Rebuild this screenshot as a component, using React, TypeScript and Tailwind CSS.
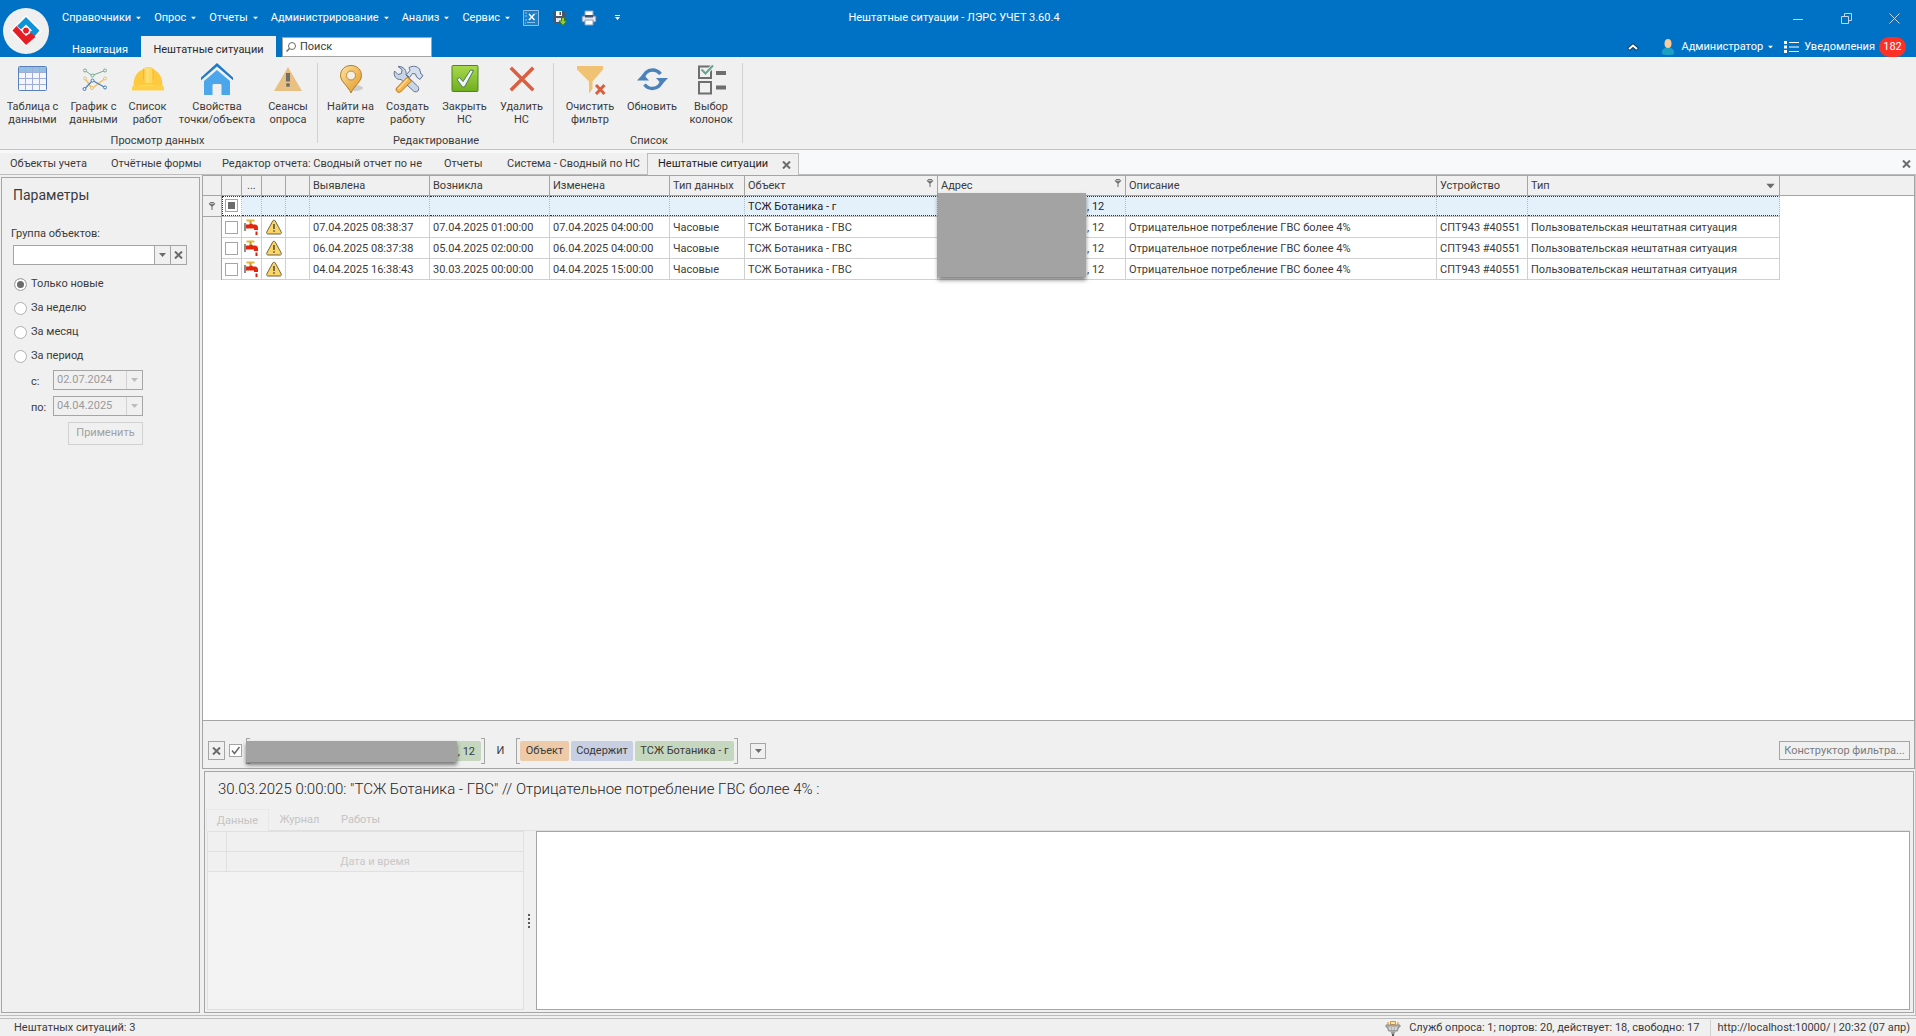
import { useState, type ReactNode } from "react";
import clsx from "clsx";

type IconProps = { className?: string };

function Arrow({ className }: IconProps) {
  return (
    <svg viewBox="0 0 7 4" className={clsx("h-1 w-[7px] shrink-0", className)}>
      <path d="M0 0h7L3.500 4z" fill="currentColor" />
    </svg>
  );
}

function Cross({ className }: IconProps) {
  return (
    <svg viewBox="0 0 9 8" className={clsx("h-2 w-[9px] shrink-0", className)}>
      <path d="M1 .5l7 7M8 .5l-7 7" stroke="currentColor" strokeWidth="2" />
    </svg>
  );
}

function FunnelIcon({ className }: IconProps) {
  return (
    <svg viewBox="0 0 8 8" className={clsx("size-2 shrink-0", className)}>
      <path d="M1 2l2.500 2.500V8h1V4.500L7 2z" fill="#6b6b6b" />
      <ellipse cx="4" cy="1.700" rx="2.700" ry="1.200" fill="#c8c8c8" stroke="#6b6b6b" strokeWidth="1" />
    </svg>
  );
}

function Logo() {
  return (
    <svg viewBox="0 0 46 46" className="size-[46px]">
      <circle cx="23" cy="23" r="23" fill="#efefef" />
      <path d="M23 7l16 16-16 15.500L7 23z" fill="#fff" />
      <path d="M23 9l13.500 13.500L31.500 28.500 26.500 24l2.500-1.500-6-6-5 5-4-3.500z" fill="#0d94d8" />
      <path d="M9.500 22.500l4-4.500 9.500 10 5-3.500 4.500 4.500L23 37z" fill="#e31e24" />
      <circle cx="23" cy="22.500" r="3.500" fill="#e31e24" stroke="#fff" strokeWidth="1" />
    </svg>
  );
}

function TableIcon() {
  return (
    <svg viewBox="0 0 32 32" className="size-8">
      <rect x="1.500" y="3.500" width="28" height="24" rx="1" fill="#f4f6fd" />
      <path d="M2 4h27v5H2z" fill="#94bfe0" />
      <path d="M2 9.500h27M2 15.500h27M2 21.500h27M8.500 4v23M15.500 4v23M22.500 4v23" stroke="#9fadd8" />
      <rect x="1.500" y="3.500" width="28" height="24" rx="1" fill="none" stroke="#5a80bb" />
    </svg>
  );
}

function ChartIcon() {
  return (
    <svg viewBox="0 0 32 32" className="size-8" fill="none">
      <path d="M7 7.500l7 5 13-5" stroke="#6fae93" />
      <path d="M7 15.500l7 10 13-10" stroke="#edc06a" strokeWidth="1.500" />
      <path d="M6 26.500l8.500-9L27 24.500" stroke="#4a7fb8" strokeWidth="1.200" />
      <g fill="#f0f0f0">
        <g stroke="#6fae93">
          <circle cx="7" cy="7.500" r="1.500" />
          <circle cx="14.500" cy="12.500" r="1.500" />
          <circle cx="27" cy="7.500" r="1.500" />
        </g>
        <g stroke="#edc06a">
          <circle cx="7" cy="15.500" r="1.500" />
          <circle cx="14" cy="25" r="1.500" />
          <circle cx="27" cy="15.500" r="1.500" />
        </g>
        <g stroke="#4a7fb8">
          <circle cx="6.500" cy="26" r="1.500" />
          <circle cx="14.500" cy="17.500" r="1.500" />
          <circle cx="27" cy="24.500" r="1.500" />
        </g>
      </g>
    </svg>
  );
}

function HelmetIcon() {
  return (
    <svg viewBox="0 0 32 32" className="size-8">
      <path d="M1.500 22.500C1.500 13 6 7.500 12 6h8c6 1.500 10.500 7 10.500 16.500z" fill="#fec93f" />
      <path d="M0 25c0-2 2-3.500 5-3.500 7 2 15 2 22 0 3 0 5 1.500 5 3.500v2.500H0z" fill="#ffcf4a" />
      <path d="M11 5.500h1.500V18L11 16zM20 5.500h1.500V16L20 18z" fill="#f1b62d" />
      <path d="M12.500 6c0-1.200.8-2 2-2h4c1.200 0 2 .8 2 2v12c0 1.800-1.700 2.500-4 2.500s-4-.7-4-2.500z" fill="#ffd85e" />
      <path d="M14.500 5h2v14h-2z" fill="#ffe27f" />
    </svg>
  );
}

function HouseIcon() {
  return (
    <svg viewBox="0 0 32 32" className="size-8">
      <path d="M16 7l13 11v14h-8.500V22.500c0-1-.5-1.500-1.500-1.500h-6c-1 0-1.500.5-1.500 1.500V32H3V18z" fill="#4ba6ec" />
      <path d="M0 14.500L16 0l16 14.500v2.700L16 3.500 0 17.200z" fill="#1f78c8" />
    </svg>
  );
}

function SessionsIcon() {
  return (
    <svg viewBox="0 0 32 32" className="size-8">
      <path d="M16 4l14 24H2z" fill="#e8c081" />
      <path d="M14 10h4v8.500h-4z" fill="#6e6e6e" />
      <circle cx="16" cy="22" r="2" fill="#6e6e6e" />
    </svg>
  );
}

function PinIcon() {
  return (
    <svg viewBox="0 0 32 32" className="size-8">
      <defs>
        <linearGradient id="pin" x1="0" y1="0" x2="1" y2="1">
          <stop offset="0" stopColor="#fbe3a4" />
          <stop offset="1" stopColor="#e3951f" />
        </linearGradient>
      </defs>
      <ellipse cx="20" cy="25" rx="8" ry="3" fill="#000" opacity=".15" />
      <path d="M16 2.500C9.600 2.500 5.500 7 5.500 12.500c0 6.500 7.500 10 10.500 17.500 3-7.500 10.500-11 10.500-17.500C26.500 7 22.400 2.500 16 2.500z" fill="url(#pin)" stroke="#b37d24" />
      <circle cx="16" cy="12.500" r="4.500" fill="#f3efe6" stroke="#b98a3d" />
    </svg>
  );
}

function ToolsIcon() {
  return (
    <svg viewBox="0 0 32 32" className="size-8">
      <path d="M6 3.500l4 3-.5 4-3.500 1L2.500 8c-1.500 5 2 9 6.500 8.500L21.500 28c1.500 1.500 4.500 1 5-1s0-3-1-4L14 12c1-4.500-2.500-9-8-8.500z" fill="#c9d5e6" stroke="#5f7391" />
      <path d="M17 4.500c4-2 8-1.500 10.500 1.500l1.500 5 2 1.500-3 4-3.500-2.500-1-3-3-.5-3 4-3-3 3.500-4z" fill="#d4deec" stroke="#5f7391" />
      <path d="M15.500 14l4 4L8.500 29c-2.500 1.500-5.500-1.500-4-4z" fill="#f6b54d" stroke="#b87316" />
      <path d="M15.500 16L6.500 26" stroke="#fcdc9c" strokeWidth="1.500" />
    </svg>
  );
}

function DoneIcon() {
  return (
    <svg viewBox="0 0 32 32" className="size-8">
      <defs>
        <linearGradient id="done" x1="0" y1="0" x2="0" y2="1">
          <stop offset="0" stopColor="#a9d94c" />
          <stop offset="1" stopColor="#6fae20" />
        </linearGradient>
      </defs>
      <rect x="3" y="2.500" width="26" height="26" rx="1" fill="url(#done)" stroke="#4f8423" />
      <path d="M8 16.500l2.500-2 3.500 4L21.500 7l3 .5-9 16.500h-2z" fill="#eff5fb" stroke="#4d7a55" />
    </svg>
  );
}

function DeleteIcon() {
  return (
    <svg viewBox="0 0 32 32" className="size-8">
      <path d="M6 6l20 20M26 6L6 26" stroke="#da5f41" strokeWidth="3.500" strokeLinecap="square" />
    </svg>
  );
}

function ClearFilterIcon() {
  return (
    <svg viewBox="0 0 32 32" className="size-8">
      <path d="M3 3h26v3.500l-10.500 12V26L15 30.500V18.500L3 6.500z" fill="#f0c274" />
      <path d="M22 22l8.500 9M30.500 22L22 31" stroke="#da5f41" strokeWidth="3" />
    </svg>
  );
}

function RefreshIcon() {
  return (
    <svg viewBox="0 0 32 32" className="size-8" fill="none">
      <path d="M7 16c.5-5.500 4.500-9 9.500-9 3.500 0 6 1.500 8 4" stroke="#4b82ba" strokeWidth="3.500" />
      <path d="M26 16.500c-.5 5.500-4.500 9-9.500 9-3.500 0-6-1.500-8-4" stroke="#4b82ba" strokeWidth="3.500" />
      <path d="M1 17.500L7 11l6 6.500zM32 15l-6 6.500-6-6.500z" fill="#4b82ba" />
    </svg>
  );
}

function ColumnsIcon() {
  return (
    <svg viewBox="0 0 32 32" className="size-8" fill="none">
      <path d="M4 3.500h12V15H4zM4 19h12v11.500H4z" stroke="#6e6e6e" strokeWidth="2" />
      <path d="M21 10h10M21 24.500h10" stroke="#6e6e6e" strokeWidth="4" />
      <path d="M6.500 6.500l4 4.500L18 2.500" stroke="#f0f0f0" strokeWidth="4" />
      <path d="M6.500 6.500l4 4L18 2.500" stroke="#62a78c" strokeWidth="2" />
    </svg>
  );
}

function QuickCloseIcon() {
  return (
    <svg viewBox="0 0 16 16" className="size-4" fill="none">
      <path d="M.5.500h15v15H.5z" stroke="#8fc1e8" fill="#1b7fcb" />
      <path d="M6 4l5.500 6M11.500 4L6 10" stroke="#fff" strokeWidth="1.500" />
      <path d="M2 3h2M2 6h2M2 10h2M4 12.500h8M2 13h1M13 3v1" stroke="#8cc0e8" />
    </svg>
  );
}

function SaveIcon() {
  return (
    <svg viewBox="0 0 16 16" className="size-4">
      <path d="M1 1h12v12H3l-2-2z" fill="#4a5568" />
      <path d="M4 1h6v5H4z" fill="#fff" />
      <path d="M7.500 2H9v3H7.500z" fill="#4a5568" />
      <path d="M4 8h7v4H4z" fill="#dfe6ee" />
      <path d="M9.500 7.500h3V11H15l-4 4.500L7 11h2.500z" fill="#8fd036" stroke="#3c7a14" />
    </svg>
  );
}

function PrinterIcon() {
  return (
    <svg viewBox="0 0 16 16" className="size-4">
      <path d="M4 1h8v6H4z" fill="#fff" stroke="#8ba0bd" />
      <path d="M1 6h14v6H1z" fill="#dfe7f3" stroke="#5c7396" />
      <path d="M4 5h8v2.500H4z" fill="#41536f" />
      <path d="M4 10h8v5H4z" fill="#fff" stroke="#8ba0bd" />
    </svg>
  );
}

function TapIcon() {
  return (
    <svg viewBox="0 0 16 16" className="size-4">
      <path d="M0 4h2v8H0z" fill="#8d8d8d" />
      <path d="M2 5.500h3l2-1.500 2 1.500h2c2 0 3 1.200 3 3.500V11h-4V9.500H2z" fill="#e2270c" />
      <path d="M2.500 1.500h8" stroke="#e0b63a" strokeWidth="2" />
      <path d="M6.500 2v3" stroke="#c89a22" strokeWidth="2" />
      <path d="M11.500 12.500h2V16h-2z" fill="#d9200a" />
    </svg>
  );
}

function WarningIcon() {
  return (
    <svg viewBox="0 0 16 16" className="size-4">
      <path d="M8 1.200c.6 0 1 .3 1.300.8l5.900 11c.5 1-.1 2-1.200 2H2C.9 15 .3 14 .8 13l5.900-11c.3-.5.7-.8 1.300-.8z" fill="#fcd567" stroke="#6d6346" />
      <path d="M7.200 5h1.600v5H7.200zM7.200 11.200h1.600v1.600H7.200z" fill="#55533f" />
    </svg>
  );
}

function PlugIcon() {
  return (
    <svg viewBox="0 0 16 16" className="size-4">
      <path d="M3 1v3M13 1v3" stroke="#d08a2e" />
      <path d="M5.500.500h5v3h-5z" fill="#fbe39a" stroke="#dc942c" />
      <path d="M1 4h14v2h-1.500l-1 4H3.500l-1-4H1z" fill="#b5b5b5" stroke="#8b8b8b" />
      <path d="M5 6v3M8 6v3M11 6v3" stroke="#eee" />
      <path d="M5.500 10.500h5L9 14H7z" fill="#9a9a9a" />
      <path d="M8 13v3" stroke="#555" strokeWidth="2" />
    </svg>
  );
}

const menuItems = ["Справочники", "Опрос", "Отчеты", "Администрирование", "Анализ", "Сервис"];

function Header() {
  return (
    <header className="relative h-[57px] shrink-0 bg-[#0072c6] text-white">
      <button aria-label="ЛЭРС" className="absolute left-[3px] top-2 z-10">
        <Logo />
      </button>
      <div className="grid h-9 grid-cols-[1fr_auto_1fr] items-start pt-[9px] pr-2">
        <nav className="flex h-[18px] items-center gap-3 pl-[62px]">
          {menuItems.map((item) => (
            <button key={item} className="flex items-center gap-1">
              {item}
              <Arrow className="scale-75" />
            </button>
          ))}
          <div className="flex items-center gap-[13px]">
            <button aria-label="Закрыть окно"><QuickCloseIcon /></button>
            <button aria-label="Сохранить"><SaveIcon /></button>
            <button aria-label="Печать" className="mr-1"><PrinterIcon /></button>
            <button aria-label="Настройка панели">
              <svg viewBox="0 0 7 6" className="h-1.5 w-[7px]">
                <path d="M1 0h5v1H1zM1 2h5L3.500 5z" fill="#fff" />
              </svg>
            </button>
          </div>
        </nav>
        <h1 className="flex h-[18px] items-center">Нештатные ситуации - ЛЭРС УЧЕТ 3.60.4</h1>
        <div className="flex h-[18px] items-center justify-end gap-[37px] pr-[8px] text-[#c9d6e2]">
          <button aria-label="Свернуть">
            <svg viewBox="0 0 11 11" className="size-[11px]"><path d="M0 6.500h10" stroke="currentColor" /></svg>
          </button>
          <button aria-label="Восстановить">
            <svg viewBox="0 0 11 11" className="size-[11px]" fill="none" stroke="currentColor">
              <path d="M.5 3.500h7v7h-7zM3.500 3V.500h7v7H8" />
            </svg>
          </button>
          <button aria-label="Закрыть">
            <svg viewBox="0 0 11 11" className="size-[11px]"><path d="M.5.500l10 10M10.500.500l-10 10" stroke="currentColor" /></svg>
          </button>
        </div>
      </div>
      <div className="flex h-[21px] items-end justify-between pr-[10px]">
        <div className="flex h-[21px] pl-[59px]">
          <button className="w-[82px] pt-1.5 text-center">Навигация</button>
          <button className="w-[135px] bg-[#f0f0f0] pt-1.5 text-center text-[#2b2b2b]">Нештатные ситуации</button>
          <label className="ml-1.5 mt-px flex h-5 w-[150px] items-center gap-1 border border-[#a5a5a5] bg-white px-[3px]">
            <svg viewBox="0 0 10 10" className="size-[10px] shrink-0" fill="none" stroke="#6b6b6b">
              <circle cx="6" cy="4" r="3.500" />
              <path d="M3.500 6.500L.5 9.500" strokeWidth="1.500" />
            </svg>
            <input aria-label="Поиск" placeholder="Поиск" className="w-full min-w-0 outline-none placeholder:text-[#3b3b3b]" />
          </label>
        </div>
        <div className="flex h-5 items-center">
          <button aria-label="Свернуть ленту" className="mr-[22px]">
            <svg viewBox="0 0 12 8" className="h-2 w-3" fill="none">
              <path d="M1.500 6.500L6 2.500l4.500 4" stroke="#0a3d66" strokeWidth="4" />
              <path d="M2 6l4-3.500L10 6" stroke="#fff" strokeWidth="2" />
            </svg>
          </button>
          <button className="mr-2.5 flex items-center gap-1">
            <svg viewBox="0 0 14 16" className="mr-0.5 h-4 w-[14px]">
              <path d="M1 15c-1-3.500 1.500-6.500 6-6.500s7 3 6 6.500c-2 1.300-10 1.300-12 0z" fill="#1ba0c4" />
              <ellipse cx="7" cy="4.500" rx="3.500" ry="4.500" fill="#fbcb9b" />
            </svg>
            Администратор
            <Arrow className="scale-75" />
          </button>
          <button className="flex items-center gap-1">
            <svg viewBox="0 0 15 12" className="mr-px h-3 w-[15px]">
              <path d="M0 0h3v3H0zM0 4.500h3v3H0zM0 9h3v3H0zM5 1h10v1H5zM5 5.500h10v1H5zM5 10h10v1H5z" fill="#fff" />
            </svg>
            Уведомления
            <span className="flex h-5 w-[27px] items-center justify-center rounded-full bg-[#fd3025]">182</span>
          </button>
        </div>
      </div>
    </header>
  );
}

function RibbonButton({ icon, lines, className }: { icon: ReactNode; lines: string[]; className: string }) {
  return (
    <button className={clsx("flex flex-col items-center gap-[5px] pt-1.5 leading-[13px]", className)}>
      {icon}
      <span>
        {lines.map((line) => (
          <span key={line} className="block whitespace-nowrap">{line}</span>
        ))}
      </span>
    </button>
  );
}

function RibbonGroup({ title, className, children }: { title: string; className?: string; children: ReactNode }) {
  return (
    <section className={clsx("relative flex flex-col justify-between pb-0.5 after:absolute after:right-0 after:top-1.5 after:h-20 after:border-r after:border-[#d2d2d2]", className)}>
      <div className="flex">{children}</div>
      <h2 className="text-center leading-[13px]">{title}</h2>
    </section>
  );
}

function Ribbon() {
  return (
    <div className="flex h-[93px] shrink-0 border-b border-[#c2c2c2] bg-[#f0f0f0]">
      <RibbonGroup title="Просмотр данных" className="pl-0.5 pr-[5px]">
        <RibbonButton icon={<TableIcon />} lines={["Таблица с", "данными"]} className="w-[61px]" />
        <RibbonButton icon={<ChartIcon />} lines={["График с", "данными"]} className="w-[61px]" />
        <RibbonButton icon={<HelmetIcon />} lines={["Список", "работ"]} className="w-[47px]" />
        <RibbonButton icon={<HouseIcon />} lines={["Свойства", "точки/объекта"]} className="w-[92px]" />
        <RibbonButton icon={<SessionsIcon />} lines={["Сеансы", "опроса"]} className="w-[50px]" />
      </RibbonGroup>
      <RibbonGroup title="Редактирование" className="px-1">
        <RibbonButton icon={<PinIcon />} lines={["Найти на", "карте"]} className="w-[57px]" />
        <RibbonButton icon={<ToolsIcon />} lines={["Создать", "работу"]} className="w-[57px]" />
        <RibbonButton icon={<DoneIcon />} lines={["Закрыть", "НС"]} className="w-[57px]" />
        <RibbonButton icon={<DeleteIcon />} lines={["Удалить", "НС"]} className="w-[57px]" />
      </RibbonGroup>
      <RibbonGroup title="Список" className="pl-[3px] pr-0.5">
        <RibbonButton icon={<ClearFilterIcon />} lines={["Очистить", "фильтр"]} className="w-[66px]" />
        <RibbonButton icon={<RefreshIcon />} lines={["Обновить"]} className="w-[58px]" />
        <RibbonButton icon={<ColumnsIcon />} lines={["Выбор", "колонок"]} className="w-[60px]" />
      </RibbonGroup>
    </div>
  );
}

const documentTabs = [
  { label: "Объекты учета", width: "w-[101px]" },
  { label: "Отчётные формы", width: "w-[111px]" },
  { label: "Редактор отчета: Сводный отчет по не", width: "w-[222px]" },
  { label: "Отчеты", width: "w-[63px]" },
  { label: "Система - Сводный по НС", width: "w-[150px]" },
];

function DocumentTabs() {
  return (
    <div className="flex h-[25px] shrink-0 items-stretch border-b border-[#bdbdbd] bg-[#f8f9fb] pt-[3px]">
      {documentTabs.map((tab) => (
        <button key={tab.label} className={clsx("whitespace-nowrap bg-[#f0f0f0] pl-2.5 pt-0.5 text-left", tab.width)}>
          {tab.label}
        </button>
      ))}
      <div className="-mb-px flex w-[152px] items-center justify-between border border-b-0 border-[#bdbdbd] bg-[#f0f0f0] pl-2.5 pr-[7px] text-[#1e1e1e]">
        <button>Нештатные ситуации</button>
        <button aria-label="Закрыть вкладку" className="text-[#6b6b6b]"><Cross /></button>
      </div>
      <button aria-label="Закрыть" className="ml-auto pr-[5px] text-[#6b6b6b]"><Cross /></button>
    </div>
  );
}

function DateSelect({ id, label, value }: { id: string; label: string; value: string }) {
  return (
    <div className="flex h-[26px] items-start">
      <label htmlFor={id} className="w-[22px] pt-[5px] leading-[13px]">{label}</label>
      <div className="flex h-5 w-[90px] border border-[#a5a5a5] text-[#9a9a9a]">
        <select id={id} disabled className="min-w-0 flex-1 appearance-none pl-[3px]">
          <option>{value}</option>
        </select>
        <span className="flex w-4 items-center justify-center border-l border-[#d2d2d2] text-[#bdbdbd]"><Arrow /></span>
      </div>
    </div>
  );
}

const periods = ["Только новые", "За неделю", "За месяц", "За период"];

function Sidebar() {
  const [period, setPeriod] = useState(periods[0]);

  return (
    <aside className="ml-px mt-0.5 w-[199px] shrink-0 border border-[#a5a5a5] pl-[11px]">
      <h2 className="pt-[7px] text-[14px] leading-5">Параметры</h2>
      <label htmlFor="group" className="-ml-0.5 mt-[22px] block leading-[13px]">Группа объектов:</label>
      <div className="mt-[5px] flex h-5 w-[174px] border border-[#a5a5a5] text-[#6b6b6b]">
        <select id="group" className="min-w-0 flex-1 appearance-none bg-white" />
        <span className="flex w-4 items-center justify-center border-l border-[#a5a5a5]"><Arrow /></span>
        <button aria-label="Очистить" className="flex w-4 items-center justify-center border-l border-[#a5a5a5]"><Cross /></button>
      </div>
      <div className="mt-[7px]">
        {periods.map((item) => (
          <label key={item} className="flex h-6 items-center gap-1 pl-px">
            <input
              type="radio"
              name="period"
              checked={period === item}
              onChange={() => setPeriod(item)}
              className="size-[13px] appearance-none rounded-full border border-[#b0b0b0] bg-white checked:bg-[#6b6b6b] checked:shadow-[inset_0_0_0_2px_#fff]"
            />
            {item}
          </label>
        ))}
      </div>
      <div className="mt-0.5 pl-[18px]">
        <DateSelect id="from" label="с:" value="02.07.2024" />
        <DateSelect id="to" label="по:" value="04.04.2025" />
        <button disabled className="ml-[37px] h-[23px] w-[75px] border border-[#d2d2d2] text-[#a0a0a0]">Применить</button>
      </div>
    </aside>
  );
}

const rows = [
  { found: "07.04.2025 08:38:37", started: "07.04.2025 01:00:00", changed: "07.04.2025 04:00:00" },
  { found: "06.04.2025 08:37:38", started: "05.04.2025 02:00:00", changed: "06.04.2025 04:00:00" },
  { found: "04.04.2025 16:38:43", started: "30.03.2025 00:00:00", changed: "04.04.2025 15:00:00" },
];

function HeadCell({ children }: { children?: ReactNode }) {
  return (
    <th className="h-5 border-b border-r border-[#a5a5a5] bg-[#f0f0f0] p-0 px-[3px] text-left font-normal last:border-r-0">
      <div className="flex h-full items-center justify-between whitespace-nowrap leading-[13px]">{children}</div>
    </th>
  );
}

function FilterCell({ className, children }: { className?: string; children?: ReactNode }) {
  return (
    <td className="h-[21px] border-b border-[#c2c2c2] bg-[#e5f1fa] p-0 text-[#1e1e1e]">
      <div className={clsx("h-5 border-y border-r border-dotted border-y-[#333] border-r-[#b8b8b8] px-[3px] leading-5", className)}>{children}</div>
    </td>
  );
}

function Cell({ className, children }: { className?: string; children?: ReactNode }) {
  return (
    <td className={clsx("h-[21px] whitespace-nowrap border-b border-r border-[#d0d0d0] p-0 px-[3px] pt-0.5 leading-[18px]", className)}>{children}</td>
  );
}

function IconCell({ className, children }: { className?: string; children?: ReactNode }) {
  return <td className={clsx("h-[21px] border-b border-r border-[#d0d0d0] p-0", className)}>{children}</td>;
}

const checkClass =
  "block size-[13px] appearance-none border border-[#a5a5a5] bg-white checked:bg-[#6b6b6b] checked:shadow-[inset_0_0_0_2px_#fff]";

function IncidentTable() {
  return (
    <table className="w-full table-fixed border-separate border-spacing-0">
      <colgroup>
        <col className="w-[19px]" />
        <col className="w-5" />
        <col className="w-5" />
        <col className="w-6" />
        <col className="w-6" />
        <col className="w-[120px]" />
        <col className="w-[120px]" />
        <col className="w-[120px]" />
        <col className="w-[75px]" />
        <col className="w-[193px]" />
        <col className="w-[188px]" />
        <col className="w-[311px]" />
        <col className="w-[91px]" />
        <col className="w-[252px]" />
        <col />
      </colgroup>
      <thead>
        <tr>
          <HeadCell />
          <HeadCell />
          <HeadCell><span className="pl-0.5">...</span></HeadCell>
          <HeadCell />
          <HeadCell />
          <HeadCell>Выявлена</HeadCell>
          <HeadCell>Возникла</HeadCell>
          <HeadCell>Изменена</HeadCell>
          <HeadCell>Тип данных</HeadCell>
          <HeadCell>Объект<FunnelIcon className="mb-1.5" /></HeadCell>
          <HeadCell>Адрес<FunnelIcon className="mb-1.5" /></HeadCell>
          <HeadCell>Описание</HeadCell>
          <HeadCell>Устройство</HeadCell>
          <HeadCell>Тип<Arrow className="mr-0.5 scale-125 text-[#6b6b6b]" /></HeadCell>
          <HeadCell />
        </tr>
      </thead>
      <tbody>
        <tr>
          <td className="border-b border-r border-[#a5a5a5] bg-[#f0f0f0] p-0"><FunnelIcon className="mx-auto" /></td>
          <FilterCell className="border-l border-l-[#333] bg-white">
            <input
              type="checkbox"
              aria-label="Выбрать все"
              defaultChecked
              className={clsx(checkClass, "-ml-px mt-0.5")}
            />
          </FilterCell>
          <FilterCell />
          <FilterCell />
          <FilterCell />
          <FilterCell />
          <FilterCell />
          <FilterCell />
          <FilterCell />
          <FilterCell>ТСЖ Ботаника - г</FilterCell>
          <FilterCell className="relative pl-[149px]">
            <span className="absolute -top-1 left-0 z-10 h-[84px] w-[148px] bg-[#a3a3a3] shadow-[0_3px_4px_rgba(0,0,0,0.5)]" />
            , 12
          </FilterCell>
          <FilterCell />
          <FilterCell />
          <FilterCell className="border-r-[#333]" />
          <td />
        </tr>
        {rows.map((row) => (
          <tr key={row.found}>
            <td className="border-r border-[#a5a5a5] bg-[#f0f0f0] p-0" />
            <IconCell className="pl-[3px]"><input type="checkbox" aria-label={row.found} className={checkClass} /></IconCell>
            <IconCell className="pl-0.5"><TapIcon /></IconCell>
            <IconCell className="pl-1"><WarningIcon /></IconCell>
            <IconCell />
            <Cell>{row.found}</Cell>
            <Cell>{row.started}</Cell>
            <Cell>{row.changed}</Cell>
            <Cell>Часовые</Cell>
            <Cell>ТСЖ Ботаника - ГВС</Cell>
            <Cell className="pl-[149px]">, 12</Cell>
            <Cell>Отрицательное потребление ГВС более 4%</Cell>
            <Cell>СПТ943 #40551</Cell>
            <Cell>Пользовательская нештатная ситуация</Cell>
            <td />
          </tr>
        ))}
      </tbody>
    </table>
  );
}

function Bracket({ right }: { right?: boolean }) {
  return (
    <span className={clsx("h-[26px] w-1 border-y border-[#a5a5a5]", right ? "border-r" : "border-l")} />
  );
}

function FilterBar() {
  return (
    <div className="flex h-12 shrink-0 items-center border-t border-[#a5a5a5] bg-[#f0f0f0] pl-[5px] pr-1 pt-[14px] pb-0.5">
      <button aria-label="Сбросить фильтр" className="mr-1 flex h-[19px] w-[17px] items-center justify-center border border-[#a5a5a5] text-[#6b6b6b]">
        <Cross />
      </button>
      <label className="relative mr-1">
        <input type="checkbox" aria-label="Фильтр включен" defaultChecked className="block size-[13px] appearance-none border border-[#a5a5a5] bg-white" />
        <svg viewBox="0 0 13 13" className="absolute inset-0 size-[13px]" fill="none">
          <path d="M3 6.500l2.500 3 5-6.500" stroke="#6b6b6b" strokeWidth="1.500" />
        </svg>
      </label>
      <div className="relative flex items-center">
        <span className="absolute left-0 top-[3px] z-10 h-[21px] w-[211px] bg-[#a3a3a3] shadow-[0_3px_4px_rgba(0,0,0,0.5)]" />
        <Bracket />
        <span className="h-5 w-[231px] rounded-[2px] bg-[#c6d7bf] pr-1.5 pt-px text-right leading-5">, 12</span>
        <Bracket right />
      </div>
      <span className="w-[31px] pt-px text-center">И</span>
      <Bracket />
      <div className="flex gap-0.5">
        <button className="h-5 w-[49px] rounded-[2px] bg-[#edcba8] pt-px">Объект</button>
        <button className="h-5 w-[62px] rounded-[2px] bg-[#c8cfe2] pt-px">Содержит</button>
        <button className="h-5 w-[99px] rounded-[2px] bg-[#c6d7bf] pt-px">ТСЖ Ботаника - г</button>
      </div>
      <Bracket right />
      <button aria-label="Список фильтров" className="ml-3 flex size-4 items-center justify-center border border-[#a5a5a5] text-[#6b6b6b]">
        <Arrow />
      </button>
      <button className="ml-auto h-[19px] w-[131px] border border-[#a5a5a5] pt-px text-[#7b7b7b]">Конструктор фильтра...</button>
    </div>
  );
}

function DetailPanel() {
  return (
    <section className="ml-0.5 mr-px mt-0.5 flex h-[242px] shrink-0 flex-col border border-[#a5a5a5] bg-[#f0f0f0] pb-0.5 pl-px pr-[3px]">
      <h2 className="h-[37px] pl-3 text-[15px] font-light leading-[34px] text-[#1e1e1e]">
        30.03.2025 0:00:00: "ТСЖ Ботаника - ГВС" // Отрицательное потребление ГВС более 4% :
      </h2>
      <div className="flex h-[22px] shrink-0 text-[#c4c4c4]">
        <button disabled className="w-[63px] border border-b-0 border-[#e8e8e8] pt-0.5">Данные</button>
        <div className="flex flex-1 border-b border-[#e0e0e0]">
          <button disabled className="w-[61px] pt-0.5">Журнал</button>
          <button disabled className="w-[61px] pt-0.5">Работы</button>
        </div>
      </div>
      <div className="flex min-h-0 flex-1">
        <div className="ml-px w-[317px] border border-[#e0e0e0] bg-[#f3f3f3]">
          <table className="w-full table-fixed border-separate border-spacing-0 bg-[#f0f0f0] text-[#c8c8c8]">
            <thead>
              <tr>
                <th className="h-5 w-[19px] border-b border-r border-[#e0e0e0] p-0" />
                <th className="h-5 border-b border-[#e0e0e0] p-0" />
              </tr>
              <tr>
                <th className="h-5 border-b border-r border-[#e0e0e0] p-0" />
                <th className="h-5 border-b border-[#e0e0e0] p-0 font-normal leading-[13px]">Дата и время</th>
              </tr>
            </thead>
          </table>
        </div>
        <div className="flex w-3 flex-col items-center justify-center gap-0.5 pr-0.5">
          <i className="size-0.5 bg-[#5a5a5a]" />
          <i className="size-0.5 bg-[#5a5a5a]" />
          <i className="size-0.5 bg-[#5a5a5a]" />
          <i className="size-0.5 bg-[#5a5a5a]" />
        </div>
        <div className="flex-1 border border-[#a5a5a5] bg-white" />
      </div>
    </section>
  );
}

function StatusBar() {
  return (
    <footer className="shrink-0 border-t border-[#bdbdbd] pt-0.5">
      <div className="flex h-[18px] items-center border-t border-[#bdbdbd] pl-3.5 pr-1.5 pt-0.5">
        <span>Нештатных ситуаций: 3</span>
        <span className="ml-auto flex items-center gap-2 pr-[11px]"><PlugIcon />Служб опроса: 1; портов: 20, действует: 18, свободно: 17</span>
        <span className="border-l border-[#d0d0d0] pl-1.5">http://localhost:10000/ | 20:32 (07 апр)</span>
      </div>
    </footer>
  );
}

export default function App() {
  return (
    <div className="flex h-screen flex-col overflow-hidden bg-[#f0f0f0] font-[Roboto,'Liberation_Sans',sans-serif] text-[11px] text-[#3b3b3b]">
      <Header />
      <Ribbon />
      <DocumentTabs />
      <main className="flex min-h-0 flex-1 border-r border-[#c8c8c8] pb-0.5">
        <Sidebar />
        <div className="ml-0.5 flex min-w-0 flex-1 flex-col">
          <div className="flex min-h-0 flex-1 flex-col border border-[#a5a5a5] bg-white">
            <div className="min-h-0 flex-1"><IncidentTable /></div>
            <FilterBar />
          </div>
          <DetailPanel />
        </div>
      </main>
      <StatusBar />
    </div>
  );
}
